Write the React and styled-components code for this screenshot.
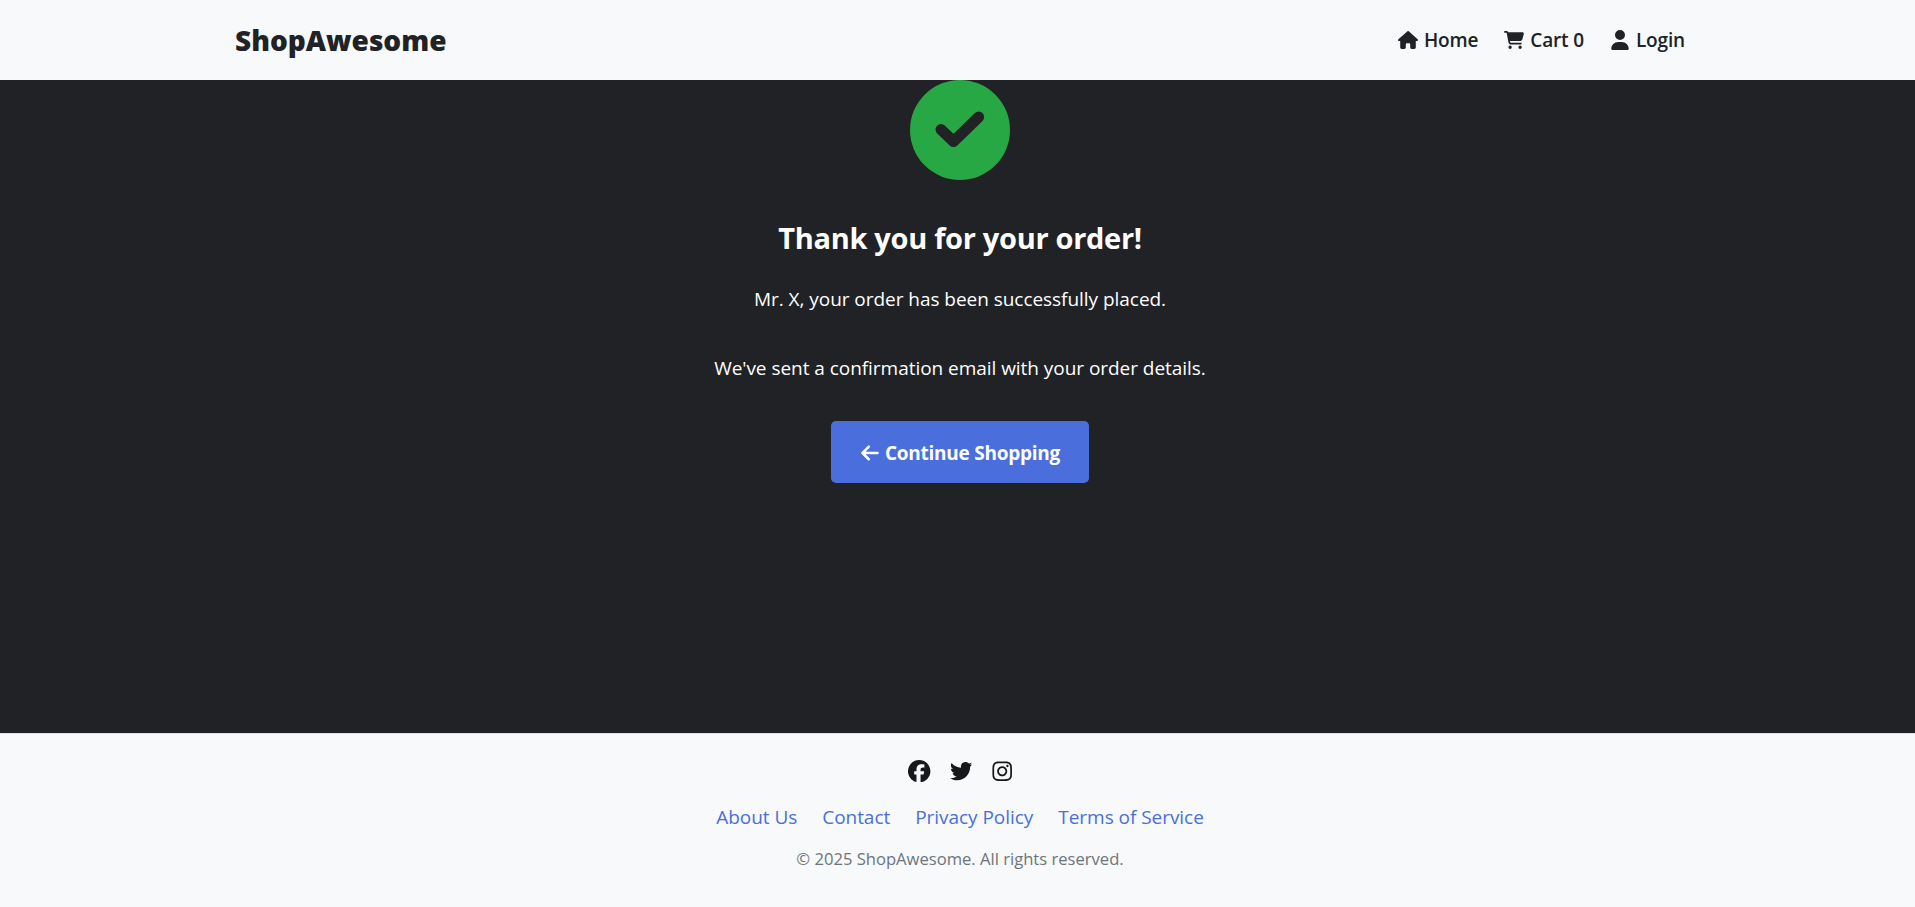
import React from 'react';
import styled, { createGlobalStyle } from 'styled-components';
import { FaHouse, FaCartShopping, FaUser, FaArrowLeft, FaFacebook, FaTwitter, FaInstagram } from 'react-icons/fa6';

const GlobalStyle = createGlobalStyle`
  html, body {
    margin: 0;
    padding: 0;
    background: #202226;
    overflow: hidden;
  }
  body {
    font-family: "Open Sans", "Noto Sans", "Liberation Sans", sans-serif;
    color: #fff;
    font-size: 19px;
  }
  * { box-sizing: border-box; }
`;

const Page = styled.div`
  width: 1920px;
  height: 907px;
  display: flex;
  flex-direction: column;
`;

const Navbar = styled.nav`
  height: 80px;
  flex: none;
  background: #f8f9fa;
  display: flex;
  align-items: center;
  justify-content: space-between;
  padding: 0 235px;
  color: #202226;
`;

const Brand = styled.a`
  font-size: 28px;
  font-weight: 800;
`;

const NavLinks = styled.div`
  display: flex;
  align-items: center;
  gap: 26px;
`;

const NavLink = styled.a`
  display: flex;
  align-items: center;
  gap: 6px;
  font-size: 19px;
  font-weight: 600;
  letter-spacing: -0.15px;
  svg {
    width: auto;
    height: 20px;
  }
`;

const Main = styled.main`
  flex: 1;
  display: flex;
  flex-direction: column;
  align-items: center;
`;

const CheckCircle = styled.svg`
  width: 100px;
  height: 100px;
  flex: none;
  display: block;
`;

const Heading = styled.h1`
  margin: 38px 0 0;
  font-size: 29px;
  line-height: 40px;
  font-weight: 700;
  letter-spacing: -0.3px;
`;

const Message = styled.p`
  margin: ${p => p.$top}px 0 0;
  font-size: 19px;
  line-height: 27px;
  letter-spacing: -0.04px;
`;

const ContinueButton = styled.a`
  margin-top: 39px;
  width: 258px;
  height: 62px;
  padding-top: 1px;
  background: #4a6fdc;
  border-radius: 5px;
  display: flex;
  align-items: center;
  justify-content: center;
  gap: 5px;
  font-size: 19px;
  font-weight: 700;
  letter-spacing: -0.25px;
  svg {
    width: auto;
    height: 20px;
  }
`;

const Footer = styled.footer`
  height: 174px;
  flex: none;
  background: #f8f9fa;
  border-top: 1px solid #dee2e6;
  display: flex;
  flex-direction: column;
  align-items: center;
  padding-top: 26px;
`;

const Socials = styled.div`
  display: flex;
  gap: 19px;
  padding-left: 2px;
  color: #16181b;
  line-height: 0;
  svg {
    width: auto;
    height: 22.4px;
  }
`;

const FooterLinks = styled.div`
  display: flex;
  gap: 25px;
  margin-top: 22px;
  color: #4a6fdc;
  font-size: 19px;
  line-height: 27px;
  letter-spacing: -0.04px;
`;

const Copyright = styled.p`
  margin: 16px 0 0;
  color: #6c757d;
  font-size: 16.6px;
  line-height: 24px;
`;

export default function App() {
  return (
    <Page>
      <GlobalStyle />
      <Navbar>
        <Brand>ShopAwesome</Brand>
        <NavLinks>
          <NavLink><FaHouse /> Home</NavLink>
          <NavLink><FaCartShopping /> Cart 0</NavLink>
          <NavLink><FaUser /> Login</NavLink>
        </NavLinks>
      </Navbar>
      <Main>
        <CheckCircle viewBox="0 0 100 100">
          <circle cx="50" cy="50" r="50" fill="#28a745" />
          <path d="M31 49.5 L43.5 61.5 L68.7 37" fill="none" stroke="#202226" strokeWidth="11" strokeLinecap="round" strokeLinejoin="round" />
        </CheckCircle>
        <Heading>Thank you for your order!</Heading>
        <Message $top={28}>Mr. X, your order has been successfully placed.</Message>
        <Message $top={42}>We've sent a confirmation email with your order details.</Message>
        <ContinueButton><FaArrowLeft /> Continue Shopping</ContinueButton>
      </Main>
      <Footer>
        <Socials>
          <FaFacebook />
          <FaTwitter />
          <FaInstagram />
        </Socials>
        <FooterLinks>
          <a>About Us</a>
          <a>Contact</a>
          <a>Privacy Policy</a>
          <a>Terms of Service</a>
        </FooterLinks>
        <Copyright>© 2025 ShopAwesome. All rights reserved.</Copyright>
      </Footer>
    </Page>
  );
}
